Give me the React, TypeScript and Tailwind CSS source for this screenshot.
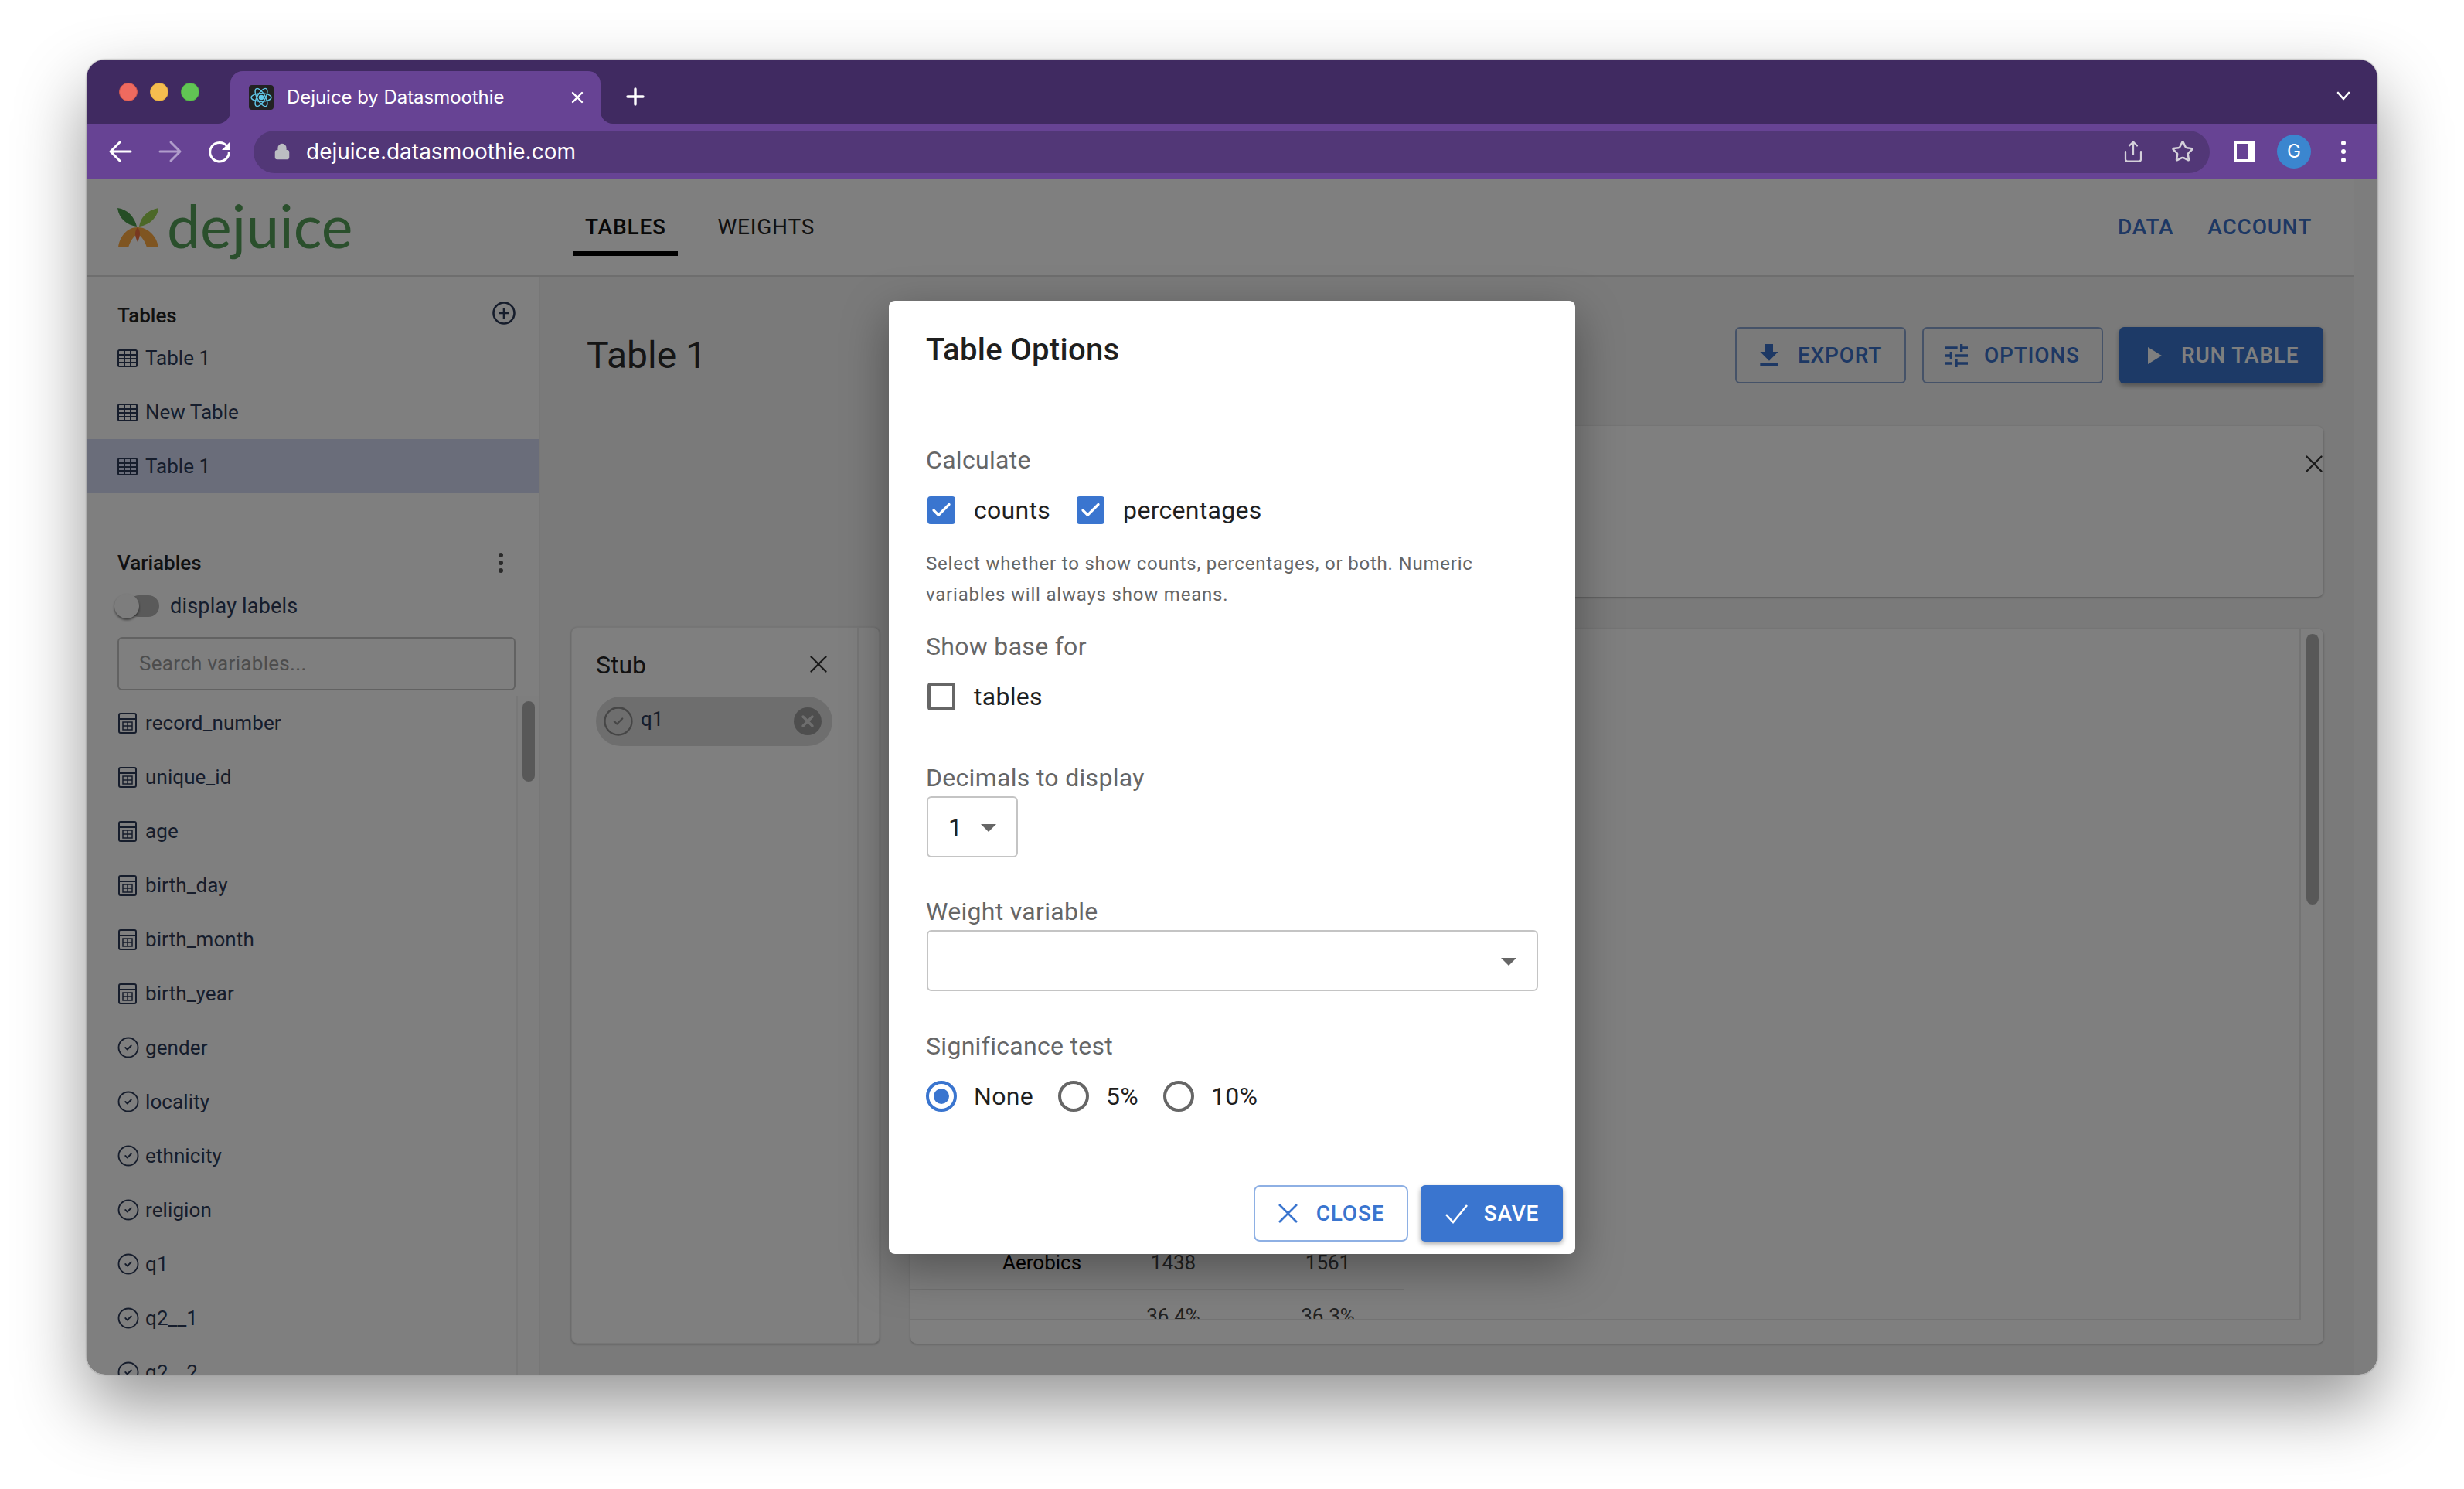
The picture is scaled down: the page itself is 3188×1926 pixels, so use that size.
import { Check, CircleCheck, Lock, Share, Star, X } from "lucide-react"

const tableRows = ["Table 1", "New Table", "Table 1"]
const numericVars = ["record_number", "unique_id", "age", "birth_day", "birth_month", "birth_year"]
const choiceVars = ["gender", "locality", "ethnicity", "religion", "q1", "q2__1", "q2__2"]

function TableIcon() {
  return (
    <svg width="28" height="28" viewBox="0 0 28 28" fill="none" stroke="currentColor" strokeWidth="2">
      <rect x="2" y="4" width="24" height="21" rx="1.5" />
      <path d="M2 10h24M2 15h24M2 20h24M10 4v21M18 4v21" />
    </svg>
  )
}

function CalcIcon() {
  return (
    <svg width="28" height="28" viewBox="0 0 28 28" fill="none" stroke="currentColor" strokeWidth="2">
      <rect x="2" y="2" width="22" height="25" rx="2" />
      <path d="M2 9h22" />
      <path d="M7 13h12v10H7zM7 18h12M13 13v10" strokeWidth="1.5" />
    </svg>
  )
}

function VarRow({ label, icon }: { label: string; icon: React.ReactNode }) {
  return (
    <div className="h-[70px] flex items-center shrink-0 text-[#2d3a58]">
      <span className="w-[36px] shrink-0">{icon}</span>
      <span className="text-[26px] tracking-[0.1px]">{label}</span>
    </div>
  )
}

function MuiCheck({ on, label }: { on: boolean; label: string }) {
  return (
    <div className="flex items-center h-[36px]">
      {on ? (
        <span className="w-[36px] h-[36px] ml-[2px] rounded-[4px] bg-[#3a75cf] flex items-center justify-center">
          <Check size={30} color="#ffffff" strokeWidth={2.6} />
        </span>
      ) : (
        <span className="w-[36px] h-[36px] ml-[2px] rounded-[4px] border-[4px] border-[#666666]" />
      )}
      <span className="ml-[24px] text-[32px] tracking-[0.3px] text-[#1f1f1f]">{label}</span>
    </div>
  )
}

function Radio({ on, label }: { on: boolean; label: string }) {
  return (
    <div className="flex items-center h-[40px]">
      <span className={`w-[40px] h-[40px] rounded-full border-[4px] flex items-center justify-center ${on ? "border-[#3a75cf]" : "border-[#666666]"}`}>
        {on && <span className="w-[20px] h-[20px] rounded-full bg-[#3a75cf]" />}
      </span>
      <span className="ml-[22px] text-[32px] tracking-[0.3px] text-[#1f1f1f]">{label}</span>
    </div>
  )
}

function Caret({ color = "#666666" }: { color?: string }) {
  return (
    <svg width="48" height="48" viewBox="0 0 24 24" fill={color}>
      <path d="M7 10l5 5 5-5z" />
    </svg>
  )
}

function FieldLabel({ mt, text }: { mt: string; text: string }) {
  return <div className={`${mt} h-[36px] leading-[36px] text-[32px] tracking-[0.3px] text-[#666666]`}>{text}</div>
}

export default function App() {
  return (
    <div className="w-[3188px] h-[1926px] bg-white pl-[112px] pt-[77px] overflow-hidden font-['Roboto',sans-serif]">
      <div className="relative w-[2964px] h-[1701px] rounded-[24px] overflow-hidden shadow-[0_40px_90px_rgba(0,0,0,0.42),0_0_2px_rgba(0,0,0,0.5)] flex flex-col bg-white">
        {/* browser chrome */}
        <div className="h-[83px] bg-[#402a61] flex items-end shrink-0 pl-[42px]">
          <div className="self-start mt-[30px] flex gap-[16px]">
            <span className="w-[24px] h-[24px] rounded-full bg-[#ee6a5f] border border-[#d0584e]" />
            <span className="w-[24px] h-[24px] rounded-full bg-[#f5bd4f] border border-[#d8a33f]" />
            <span className="w-[24px] h-[24px] rounded-full bg-[#61c454] border border-[#52a947]" />
          </div>
          <div className="relative ml-[40px] w-[479px] h-[68px] rounded-t-[16px] bg-[#674394] flex items-center pl-[24px] text-white">
            <div className="absolute -left-[16px] bottom-0 w-[16px] h-[16px] bg-[#674394]">
              <div className="w-[16px] h-[16px] rounded-br-[16px] bg-[#402a61]" />
            </div>
            <div className="absolute -right-[16px] bottom-0 w-[16px] h-[16px] bg-[#674394]">
              <div className="w-[16px] h-[16px] rounded-bl-[16px] bg-[#402a61]" />
            </div>
            <span className="w-[32px] h-[32px] rounded-[4px] bg-[#222222] flex items-center justify-center">
              <svg width="30" height="30" viewBox="0 0 30 30" fill="none" stroke="#61c8e8" strokeWidth="1.4">
                <circle cx="15" cy="15" r="2.6" fill="#61c8e8" />
                <ellipse cx="15" cy="15" rx="13" ry="5.2" />
                <ellipse cx="15" cy="15" rx="13" ry="5.2" transform="rotate(60 15 15)" />
                <ellipse cx="15" cy="15" rx="13" ry="5.2" transform="rotate(120 15 15)" />
              </svg>
            </span>
            <span className="ml-[17px] font-['Inter',sans-serif] text-[24px] tracking-[-0.05px] whitespace-nowrap">Dejuice by Datasmoothie</span>
            <X className="ml-auto mr-[18px]" size={24} strokeWidth={2.4} />
          </div>
          <svg className="ml-[33px] mb-[23px]" width="24" height="24" viewBox="0 0 24 24" stroke="white" strokeWidth="3.4" strokeLinecap="round">
            <path d="M12 2v20M2 12h20" />
          </svg>
          <svg className="ml-auto mr-[33px] mb-[25px]" width="22" height="22" viewBox="0 0 22 22" fill="none" stroke="white" strokeWidth="2.6" strokeLinecap="round" strokeLinejoin="round">
            <path d="M4 7l7 8 7-8" />
          </svg>
        </div>
        <div className="h-[72px] bg-[#674394] flex items-center shrink-0 pl-[28px] text-white">
          <svg width="32" height="32" viewBox="0 0 32 32" fill="none" stroke="white" strokeWidth="3" strokeLinecap="round" strokeLinejoin="round">
            <path d="M29 16H4M15 4L3 16l12 12" />
          </svg>
          <svg className="ml-[32px]" width="32" height="32" viewBox="0 0 32 32" fill="none" stroke="#b09ccb" strokeWidth="3" strokeLinecap="round" strokeLinejoin="round">
            <path d="M3 16h25M17 4l12 12-12 12" />
          </svg>
          <svg className="ml-[32px]" width="32" height="32" viewBox="0 0 32 32" fill="none" stroke="white" strokeWidth="3">
            <path d="M26 9.5A12.3 12.3 0 1 0 28.3 16" />
            <path d="M30 3v11H19z" fill="white" stroke="none" />
          </svg>
          <div className="ml-[28px] w-[2531px] h-[55px] rounded-full bg-[#523777] flex items-center pl-[26px]">
            <Lock size={22} fill="#bcbec2" color="#bcbec2" strokeWidth={2.2} />
            <span className="ml-[20px] font-['Inter',sans-serif] text-[28px] whitespace-nowrap">dejuice.datasmoothie.com</span>
            <Share className="ml-auto" size={30} color="#d4d0da" strokeWidth={1.8} />
            <Star className="ml-[34px] mr-[20px]" size={30} color="#d4d0da" strokeWidth={2} />
          </div>
          <span className="ml-[31px] w-[28px] h-[28px] bg-white pl-[4px] pr-[10px] py-[4px]">
            <span className="block w-full h-full bg-[#674394]" />
          </span>
          <span className="ml-[28px] w-[44px] h-[44px] rounded-full bg-[#3b86cf] flex items-center justify-center text-[24px] font-['Inter',sans-serif]">G</span>
          <span className="ml-[39px] flex flex-col gap-[5px]">
            <span className="w-[6px] h-[6px] rounded-full bg-white" />
            <span className="w-[6px] h-[6px] rounded-full bg-white" />
            <span className="w-[6px] h-[6px] rounded-full bg-white" />
          </span>
        </div>

        {/* app page */}
        <div className="flex-1 min-h-0 flex bg-[#fafafa]">
          <div className="w-[2934px] flex flex-col min-h-0">
            <header className="h-[126px] shrink-0 bg-white border-b-2 border-[#dcdcdc] flex items-center pl-[38px] pr-[55px]">
              <svg width="58" height="54" viewBox="0 0 58 54">
                <path d="M2 2C16 4 24 14 27 26C14 24 4 16 2 2Z" fill="#4a9a4a" />
                <path d="M55 2C40 5 32 14 30 26C44 24 54 14 55 2Z" fill="#98d050" />
                <path d="M28 27C15 27 5 38 3 53H16C19 44 23 38 28 36C33 38 37 44 40 53H55C53 38 41 27 28 27Z" fill="#ffaa42" />
                <path d="M28 27C24 32 24 38 28 46C32 38 32 32 28 27Z" fill="#f07040" />
              </svg>
              <span className="ml-[8px] font-['Lato',sans-serif] text-[77px] leading-none text-[#549e58] -mt-[6px]">dejuice</span>
              <div className="ml-[285px] self-stretch flex text-[28px] tracking-[0.8px]">
                <div className="w-[136px] flex flex-col items-center border-b-[6px] border-black mb-[25px] pt-[41px] h-[99px] font-medium text-[#111111] box-border">
                  TABLES
                </div>
                <div className="ml-[51px] pt-[41px] text-[#222222]">WEIGHTS</div>
              </div>
              <div className="ml-auto flex gap-[44px] text-[28px] font-medium tracking-[0.8px] text-[#3a70c8]">
                <span>DATA</span>
                <span>ACCOUNT</span>
              </div>
            </header>

            <div className="flex-1 min-h-0 flex">
              <aside className="w-[587px] shrink-0 bg-white border-r-2 border-[#eeeeee] flex flex-col min-h-0">
                <div className="mt-[30px] h-[40px] flex items-center justify-between pl-[40px] pr-[29px] text-[26px] font-medium text-[#222222]">
                  Tables
                  <svg className="-mt-[6px]" width="32" height="32" viewBox="0 0 32 32" fill="none" stroke="#2d3a58" strokeWidth="2.6">
                    <circle cx="16" cy="16" r="13.5" />
                    <path d="M16 9v14M9 16h14" />
                  </svg>
                </div>
                {tableRows.map((t, i) => (
                  <div key={i} className={`h-[70px] flex items-center pl-[39px] text-[#2d3a58] ${i === 2 ? "bg-[#d4daf4]" : ""}`}>
                    <span className="w-[37px]">
                      <TableIcon />
                    </span>
                    <span className="text-[26px]">{t}</span>
                  </div>
                ))}
                <div className="mt-[70px] h-[40px] flex items-center justify-between pl-[40px] pr-[46px] text-[26px] font-medium text-[#222222]">
                  Variables
                  <span className="flex flex-col gap-[4px]">
                    <span className="w-[6px] h-[6px] rounded-full bg-[#555555]" />
                    <span className="w-[6px] h-[6px] rounded-full bg-[#555555]" />
                    <span className="w-[6px] h-[6px] rounded-full bg-[#555555]" />
                  </span>
                </div>
                <div className="mt-[16px] h-[40px] flex items-center pl-[36px]">
                  <span className="relative w-[58px] h-[28px]">
                    <span className="absolute right-0 top-0 w-[40px] h-[28px] rounded-full bg-[#b4b4b4]" />
                    <span className="absolute left-0 -top-[2px] w-[32px] h-[32px] rounded-full bg-[#fafafa] shadow-[0_2px_3px_rgba(0,0,0,0.5)]" />
                  </span>
                  <span className="ml-[14px] text-[27px] tracking-[0.2px] text-[#2d3a58]">display labels</span>
                </div>
                <div className="mt-[20px] ml-[40px] w-[515px] h-[69px] shrink-0 rounded-[6px] border-2 border-[#c4c4c4] flex items-center pl-[26px] text-[26px] tracking-[0.3px] text-[#9a9a9a]">
                  Search variables...
                </div>
                <div className="mt-[7px] flex-1 min-h-0 flex">
                  <div className="w-[556px] shrink-0 pl-[40px] flex flex-col overflow-hidden">
                    {numericVars.map((v) => (
                      <VarRow key={v} label={v} icon={<CalcIcon />} />
                    ))}
                    {choiceVars.map((v) => (
                      <VarRow key={v} label={v} icon={<CircleCheck className="-ml-[1px]" size={30} strokeWidth={1.5} />} />
                    ))}
                  </div>
                  <div className="flex-1 border-l-2 border-[#f0f0f0] bg-[#fcfcfc] pl-[6px] pt-[7px]">
                    <div className="w-[16px] h-[104px] rounded-full bg-[#b0b0b0]" />
                  </div>
                </div>
              </aside>

              <main className="flex-1 min-w-0 bg-[#f5f5f5] flex flex-col pl-[40px] pr-[40px] pb-[40px]">
                <div className="mt-[65px] h-[73px] shrink-0 flex items-center pl-[20px]">
                  <h1 className="text-[48px] font-normal text-[#2a2a2a]">Table 1</h1>
                  <div className="ml-auto flex gap-[21px] text-[#3a70c8]">
                    <button className="w-[221px] h-[73px] rounded-[6px] border-2 border-[#8aa4d0] flex items-center pl-[22px] gap-[17px] text-[28px] font-medium tracking-[0.8px]">
                      <svg width="40" height="40" viewBox="0 0 24 24" fill="#3a70c8">
                        <path d="M19 9h-4V3H9v6H5l7 7 7-7zM5 18v2h14v-2H5z" />
                      </svg>
                      EXPORT
                    </button>
                    <button className="w-[234px] h-[73px] rounded-[6px] border-2 border-[#8aa4d0] flex items-center pl-[22px] gap-[16px] text-[28px] font-medium tracking-[0.8px]">
                      <svg width="40" height="40" viewBox="0 0 24 24" fill="#3a70c8">
                        <path d="M3 17v2h6v-2H3zM3 5v2h10V5H3zm10 16v-2h8v-2h-8v-2h-2v6h2zM7 9v2H3v2h4v2h2V9H7zm14 4v-2H11v2h10zm-6-4h2V7h4V5h-4V3h-2v6z" />
                      </svg>
                      OPTIONS
                    </button>
                    <button className="w-[264px] h-[73px] rounded-[6px] bg-[#3a75cf] text-white shadow-[0_3px_6px_rgba(0,0,0,0.35)] flex items-center pl-[37px] gap-[25px] text-[28px] font-medium tracking-[0.8px]">
                      <svg width="18" height="22" viewBox="0 0 18 22" fill="white">
                        <path d="M0 0v22l18-11z" />
                      </svg>
                      RUN TABLE
                    </button>
                  </div>
                </div>

                <div className="mt-[55px] flex-1 min-h-0 flex gap-[40px]">
                  <div className="w-[399px] shrink-0 mt-[260px] rounded-[8px] bg-[#fefefe] border border-[#ececec] shadow-[0_1px_3px_rgba(0,0,0,0.3)] flex">
                    <div className="w-[371px] border-r-2 border-[#ececec] pl-[31px] pr-[32px] pt-[30px]">
                      <div className="flex items-center justify-between h-[36px] text-[32px] text-[#222222]">
                        Stub
                        <X className="-mr-[1px] -mt-[3px]" size={38} strokeWidth={1.5} color="#333333" />
                      </div>
                      <div className="mt-[23px] h-[64px] w-[306px] rounded-full bg-[#dddddd] flex items-center pl-[8px] pr-[14px] text-[26px] text-[#2d3a58]">
                        <CircleCheck size={42} strokeWidth={1.3} color="#8c8c8c" />
                        <span className="ml-[8px] -mt-[6px]">q1</span>
                        <span className="ml-auto w-[36px] h-[36px] rounded-full bg-[#9c9c9c] flex items-center justify-center">
                          <X size={24} strokeWidth={3.4} color="#dddddd" />
                        </span>
                      </div>
                    </div>
                  </div>

                  <div className="flex-1 min-w-0 flex flex-col gap-[41px]">
                    <div className="h-[221px] shrink-0 rounded-[8px] bg-[#fefefe] shadow-[0_1px_3px_rgba(0,0,0,0.3)] flex justify-end pt-[30px]">
                      <X className="-mr-[7px]" size={38} strokeWidth={1.5} color="#333333" />
                    </div>
                    <div className="flex-1 min-h-0 rounded-[8px] bg-[#fefefe] shadow-[0_1px_3px_rgba(0,0,0,0.3)] flex pb-[30px]">
                      <div className="w-[1799px] border-r-2 border-b-2 border-[#e8e8e8] flex flex-col justify-end text-[26px]">
                        <div className="w-[639px] h-[70px] shrink-0 border-b-2 border-[#e6e6e6] flex items-center pl-[119px]">
                          <span className="w-[151px] text-black">Aerobics</span>
                          <span className="w-[140px] text-center text-[#444444]">1438</span>
                          <span className="ml-[60px] w-[140px] text-center text-[#444444]">1561</span>
                        </div>
                        <div className="h-[37px] shrink-0 overflow-hidden pt-[18px] flex pl-[270px] text-[#444444]">
                          <span className="w-[140px] text-center leading-[30px]">36.4%</span>
                          <span className="ml-[60px] w-[140px] text-center leading-[30px]">36.3%</span>
                        </div>
                      </div>
                      <div className="pl-[7px] pt-[7px]">
                        <div className="w-[16px] h-[350px] rounded-full bg-[#b0b0b0]" />
                      </div>
                    </div>
                  </div>
                </div>
              </main>
            </div>
          </div>
          <div className="flex-1 bg-[#fafafa]" />
        </div>

        {/* modal backdrop, starts under the browser toolbar */}
        <div className="absolute left-0 right-0 top-[155px] bottom-0 bg-black/50 flex justify-center pt-[157px]">
          <div className="w-[888px] h-[1233px] rounded-[8px] bg-white shadow-[0_20px_60px_rgba(0,0,0,0.35)] pl-[48px] pr-[48px] flex flex-col">
            <h2 className="mt-[40px] h-[48px] leading-[48px] text-[40px] font-medium tracking-[0.3px] text-[#1f1f1f]">Table Options</h2>
            <FieldLabel mt="mt-[100px]" text="Calculate" />
            <div className="mt-[29px] flex gap-[32px]">
              <MuiCheck on label="counts" />
              <MuiCheck on label="percentages" />
            </div>
            <p className="mt-[31px] w-[760px] text-[24px] leading-[40px] tracking-[0.8px] text-[#666666]">
              Select whether to show counts, percentages, or both. Numeric variables will always show means.
            </p>
            <FieldLabel mt="mt-[29px]" text="Show base for" />
            <div className="mt-[29px]">
              <MuiCheck on={false} label="tables" />
            </div>
            <FieldLabel mt="mt-[69px]" text="Decimals to display" />
            <div className="mt-[6px] w-[118px] h-[79px] rounded-[6px] border-2 border-[#c4c4c4] flex items-center pl-[26px] ml-[1px] text-[32px] text-[#222222]">
              1
              <span className="ml-auto mr-[12px]">
                <Caret />
              </span>
            </div>
            <FieldLabel mt="mt-[52px]" text="Weight variable" />
            <div className="mt-[6px] w-[791px] h-[79px] rounded-[6px] border-2 border-[#c4c4c4] flex items-center justify-end pr-[12px] ml-[1px]">
              <Caret />
            </div>
            <FieldLabel mt="mt-[53px]" text="Significance test" />
            <div className="mt-[27px] flex">
              <Radio on label="None" />
              <div className="ml-[32px]">
                <Radio on={false} label="5%" />
              </div>
              <div className="ml-[32px]">
                <Radio on={false} label="10%" />
              </div>
            </div>
            <div className="mt-auto mb-[16px] -mr-[32px] flex justify-end gap-[16px]">
              <button className="w-[200px] h-[73px] rounded-[8px] border-2 border-[#8eb0e4] text-[#3a75cf] text-[28px] font-medium tracking-[0.8px] flex items-center justify-center gap-[23px]">
                <svg width="27" height="27" viewBox="0 0 27 27" stroke="#3a75cf" strokeWidth="2.6">
                  <path d="M2 2l23 23M25 2L2 25" />
                </svg>
                CLOSE
              </button>
              <button className="w-[184px] h-[73px] rounded-[6px] bg-[#3a75cf] text-white text-[28px] font-medium tracking-[0.8px] shadow-[0_3px_6px_rgba(0,0,0,0.35)] flex items-center justify-center gap-[20px]">
                <svg width="31" height="26" viewBox="0 0 31 26" fill="none" stroke="white" strokeWidth="2.6">
                  <path d="M2 14l9 10L29 2" />
                </svg>
                SAVE
              </button>
            </div>
          </div>
        </div>
      </div>
    </div>
  )
}
